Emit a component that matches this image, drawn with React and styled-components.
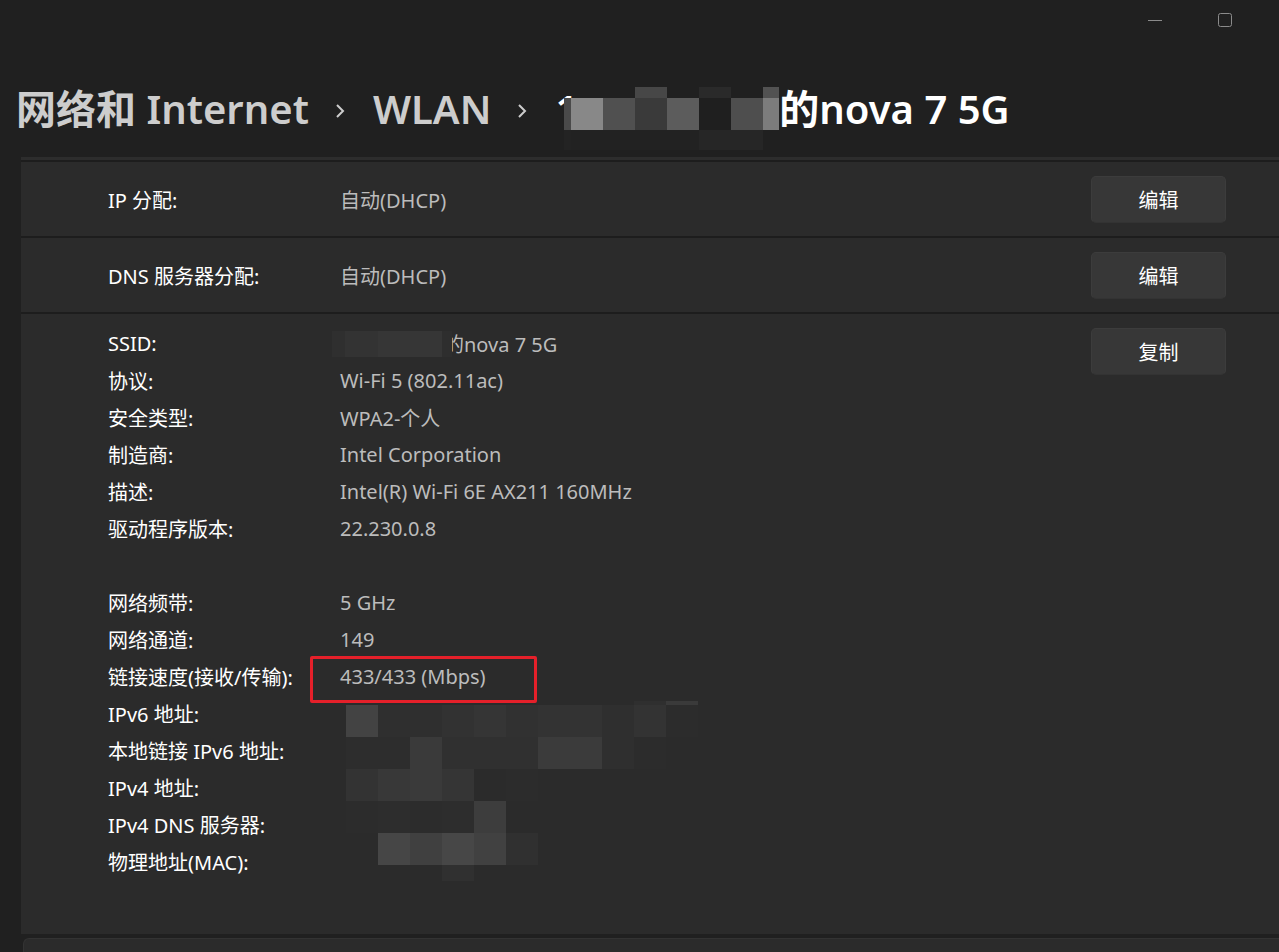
import styled, { createGlobalStyle } from 'styled-components';

const GlobalStyle = createGlobalStyle`
  *, *::before, *::after {
    box-sizing: border-box;
  }
  html, body {
    margin: 0;
    padding: 0;
    background: #202020;
  }
  body {
    font-family: "Noto Sans", "Noto Sans CJK SC", sans-serif;
    color: #ffffff;
  }
`;

const Page = styled.div`
  width: 1279px;
  height: 952px;
  overflow: hidden;
  background: #202020;
  display: flex;
  flex-direction: column;
`;

const TitleBar = styled.div`
  height: 40px;
  flex-shrink: 0;
  display: flex;
  justify-content: flex-end;
  align-items: center;
  padding-right: 46px;
  gap: 54px;
`;

const CaptionIcon = styled.svg`
  width: 16px;
  height: 16px;
  color: #8b8b8b;
`;

const Breadcrumb = styled.div`
  margin-top: 43px;
  height: 52px;
  flex-shrink: 0;
  padding-left: 16px;
  display: flex;
  align-items: center;
  font-size: 40px;
  font-weight: 600;
  line-height: 52px;
  white-space: nowrap;
`;

const Crumb = styled.span`
  color: ${(p) => (p.$current ? '#ffffff' : '#cdcdcd')};
`;

const Chevron = styled.svg`
  width: 14px;
  height: 16px;
  flex-shrink: 0;
  margin: 4px 26px 0 24px;
  color: #cdcdcd;
`;

const MosaicGrid = styled.div`
  display: grid;
  flex-shrink: 0;
  grid-template-columns: ${(p) => p.$cols};
  grid-template-rows: ${(p) => p.$rows};
`;

const TitleMosaic = styled(MosaicGrid)`
  margin-top: 19px;
  margin-left: -14px;
  position: relative;
  z-index: 1;
`;

const Card = styled.div`
  margin-top: 22px;
  margin-left: 21px;
  flex-shrink: 0;
  background: #2b2b2b;
  display: flex;
  flex-direction: column;
`;

const TopSliver = styled.div`
  height: 5px;
  background: #2d2d2d;
  border-bottom: 2px solid #1d1d1d;
`;

const SettingRow = styled.div`
  display: flex;
  align-items: center;
  height: 76px;
  padding: 0 53px 0 87px;
  border-bottom: 2px solid #1d1d1d;
`;

const Label = styled.div`
  width: 232px;
  font-size: 20px;
  color: #ffffff;
  white-space: nowrap;
`;

const Value = styled.div`
  flex: 1;
  font-size: 20px;
  color: #bcbcbc;
  white-space: nowrap;
  display: flex;
  align-items: center;
`;

const Button = styled.button`
  width: 135px;
  height: 47px;
  border-radius: 5px;
  border: 1px solid #3c3c3c;
  border-bottom-color: #333333;
  background: #373737;
  color: #ffffff;
  font-family: "Noto Sans CJK SC", sans-serif;
  font-size: 20px;
  cursor: pointer;
  flex-shrink: 0;
`;

const Details = styled.div`
  position: relative;
  height: 620px;
  display: flex;
  align-items: flex-start;
  padding: 11px 53px 0 87px;
`;

const InfoGrid = styled.div`
  flex: 1;
  display: grid;
  grid-template-columns: 232px 1fr;
  grid-auto-rows: 37px;
  align-items: center;
`;

const Spacer = styled.div`
  grid-column: 1 / -1;
`;

const DetailButton = styled(Button)`
  margin-top: 3px;
`;

const SsidMosaic = styled(MosaicGrid)`
  margin-left: -8px;
  position: relative;
  z-index: 1;
`;

const SsidText = styled.span`
  margin-left: -8px;
`;

const Redaction = styled(MosaicGrid)`
  position: absolute;
  left: 325px;
  top: 387px;
`;

const Highlight = styled.div`
  position: absolute;
  left: 289px;
  top: 342px;
  width: 227px;
  height: 47px;
  border: 3px solid #e5202a;
  border-radius: 2px;
`;

const NextCard = styled.div`
  margin-top: 4px;
  margin-left: 23px;
  flex: 1;
  background: #2b2b2b;
  border-top-left-radius: 6px;
  border-left: 1px solid #333333;
  border-top: 1px solid #333333;
`;

function Mosaic({ as: Comp, cols, rows, cells }) {
  return (
    <Comp $cols={cols} $rows={rows}>
      {cells.flat().map((c, i) => (
        <div key={i} style={{ background: c || 'transparent' }} />
      ))}
    </Comp>
  );
}

const titleCells = [
  [null, null, null, '#474747', null, '#2a2a2a', null, '#525252'],
  ['#4a4a4a', '#888888', '#505050', '#3a3a3a', '#5c5c5c', '#1f1f1f', '#4e4e4e', '#7c7c7c'],
  ['#232323', '#222222', '#222222', '#222222', '#222222', '#262626', '#262626', null],
];

const ssidCells = [['#2f2f2f', '#333333', '#363636', '#363636', '#2e2e2e']];

const B = '#2b2b2b';
const redactionCells = [
  [null, null, null, null, null, null, null, null, null, '#2f2f2f', '#3a3a3a'],
  ['#434343', '#2f2f2f', '#2f2f2f', '#323232', '#353535', '#313131', '#333333', '#333333', '#2f2f2f', '#333333', '#2c2c2c'],
  ['#2d2d2d', '#2d2d2d', '#3a3a3a', '#303030', '#303030', '#303030', '#3b3b3b', '#3b3b3b', '#2f2f2f', '#2c2c2c', B],
  ['#333333', '#383838', '#3a3a3a', '#353535', '#2b2b2b', '#2c2c2c', B, B, B, B, B],
  ['#2c2c2c', '#2d2d2d', '#2c2c2c', '#2d2d2d', '#3d3d3d', B, B, B, B, B, B],
  [B, '#464646', '#404040', '#474747', '#414141', '#303030', B, B, B, B, B],
  [null, null, null, '#303030', null, null, null, null, null, null, null],
];

const infoTop = [
  ['协议:', 'Wi-Fi 5 (802.11ac)'],
  ['安全类型:', 'WPA2-个人'],
  ['制造商:', 'Intel Corporation'],
  ['描述:', 'Intel(R) Wi-Fi 6E AX211 160MHz'],
  ['驱动程序版本:', '22.230.0.8'],
];

const infoBottom = [
  ['网络频带:', '5 GHz'],
  ['网络通道:', '149'],
  ['链接速度(接收/传输):', '433/433 (Mbps)'],
  ['IPv6 地址:', ''],
  ['本地链接 IPv6 地址:', ''],
  ['IPv4 地址:', ''],
  ['IPv4 DNS 服务器:', ''],
  ['物理地址(MAC):', ''],
];

function ChevronIcon() {
  return (
    <Chevron viewBox="0 0 14 16">
      <path d="M4 2 L10 8 L4 14" fill="none" stroke="currentColor" strokeWidth="2" />
    </Chevron>
  );
}

function InfoRows({ items }) {
  return items.map(([k, v]) => [
    <Label key={`${k}-l`}>{k}</Label>,
    <Value key={`${k}-v`}>{v}</Value>,
  ]);
}

export default function App() {
  return (
    <Page>
      <GlobalStyle />
      <TitleBar>
        <CaptionIcon viewBox="0 0 16 16">
          <path d="M1 8.5 H15" stroke="currentColor" strokeWidth="1" />
        </CaptionIcon>
        <CaptionIcon viewBox="0 0 16 16">
          <rect x="1.5" y="1.5" width="13" height="13" rx="2" fill="none" stroke="currentColor" strokeWidth="1" />
        </CaptionIcon>
      </TitleBar>

      <Breadcrumb>
        <Crumb>网络和 Internet</Crumb>
        <ChevronIcon />
        <Crumb>WLAN</Crumb>
        <ChevronIcon />
        <Crumb $current>1</Crumb>
        <Mosaic
          as={TitleMosaic}
          cols="7px repeat(6, 32px) 16px"
          rows="11px 32px 20px"
          cells={titleCells}
        />
        <Crumb $current>的nova 7 5G</Crumb>
      </Breadcrumb>

      <Card>
        <TopSliver />
        <SettingRow>
          <Label>IP 分配:</Label>
          <Value>自动(DHCP)</Value>
          <Button type="button">编辑</Button>
        </SettingRow>
        <SettingRow>
          <Label>DNS 服务器分配:</Label>
          <Value>自动(DHCP)</Value>
          <Button type="button">编辑</Button>
        </SettingRow>
        <Details>
          <InfoGrid>
            <Label>SSID:</Label>
            <Value>
              <Mosaic
                as={SsidMosaic}
                cols="13px 33px 32px 32px 10px"
                rows="26px"
                cells={ssidCells}
              />
              <SsidText>的nova 7 5G</SsidText>
            </Value>
            <InfoRows items={infoTop} />
            <Spacer />
            <InfoRows items={infoBottom} />
          </InfoGrid>
          <DetailButton type="button">复制</DetailButton>
          <Highlight />
          <Mosaic
            as={Redaction}
            cols="repeat(11, 32px)"
            rows="4px 32px 32px 32px 32px 32px 16px"
            cells={redactionCells}
          />
        </Details>
      </Card>
      <NextCard />
    </Page>
  );
}
